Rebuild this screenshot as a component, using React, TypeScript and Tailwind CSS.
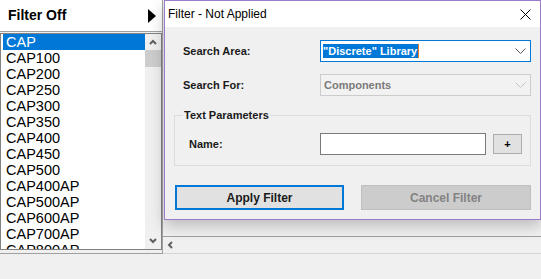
import React from 'react';

const parts = [
  'CAP', 'CAP100', 'CAP200', 'CAP250', 'CAP300', 'CAP350', 'CAP400', 'CAP450',
  'CAP500', 'CAP400AP', 'CAP500AP', 'CAP600AP', 'CAP700AP', 'CAP800AP',
];

const font = { fontFamily: '"Liberation Sans", Arial, sans-serif' };

const ComboChevron = ({ color }: { color: string }) => (
  <svg width="11" height="6" viewBox="0 0 11 6" fill="none">
    <path d="M0.5 0.5 L5.5 5.5 L10.5 0.5" stroke={color} strokeWidth="1" />
  </svg>
);

const SmallChevron = ({ dir }: { dir: 'up' | 'down' | 'left' }) => {
  const d =
    dir === 'up' ? 'M1 5 L4 2 L7 5' : dir === 'down' ? 'M1 1 L4 4 L7 1' : 'M5 1 L2 4 L5 7';
  const size = dir === 'left' ? { w: 7, h: 8 } : { w: 8, h: 6 };
  return (
    <svg width={size.w} height={size.h} viewBox={`0 0 ${size.w} ${size.h}`} fill="none">
      <path d={d} stroke="#606060" strokeWidth="2" />
    </svg>
  );
};

const PartList = () => (
  <div className="w-[163px] h-[254px] flex flex-col border-r border-b border-[#a0a0a0] bg-[#f0f0f0]">
    <div className="h-[32px] bg-white border-b border-[#a0a0a0] flex items-center justify-between pl-[8px] pr-[6px]">
      <span className="text-[14px] font-bold text-black">Filter Off</span>
      <svg width="8" height="14" viewBox="0 0 8 14">
        <path d="M0 0 L8 7 L0 14 Z" fill="#000" />
      </svg>
    </div>
    <div className="mt-[1px] h-[217px] flex border border-[#828282] bg-white">
      <div className="flex-1 overflow-hidden pl-[2px]">
        {parts.map((p, i) => (
          <div
            key={p}
            className={`h-[16px] pl-[3px] text-[14.5px] leading-[16px] ${
              i === 0 ? 'bg-[#0078d7] text-white' : 'text-black'
            }`}
          >
            {p}
          </div>
        ))}
      </div>
      <div className="w-[16px] bg-[#f0f0f0] flex flex-col">
        <div className="h-[16px] flex items-center justify-center">
          <SmallChevron dir="up" />
        </div>
        <div className="h-[17px] bg-[#cdcdcd]" />
        <div className="flex-1" />
        <div className="h-[16px] flex items-center justify-center">
          <SmallChevron dir="down" />
        </div>
      </div>
    </div>
  </div>
);

const FilterDialog = () => (
  <div className="absolute left-[164px] top-0 w-[377px] h-[220px] border border-[#9a7cc9] bg-[#f0f0f0] flex flex-col shadow-[0_6px_14px_rgba(0,0,0,0.22)]">
    <div className="h-[26px] bg-white flex items-center justify-between pl-[3px] pr-[9px]">
      <span className="text-[12px] text-black">Filter - Not Applied</span>
      <svg width="11" height="11" viewBox="0 0 11 11" fill="none">
        <path d="M0.5 0.5 L10.5 10.5 M10.5 0.5 L0.5 10.5" stroke="#000" strokeWidth="1" />
      </svg>
    </div>
    <div className="flex flex-col pt-[13px] pl-[18px] pr-[8px] text-[11px] font-bold">
      <div className="flex items-center h-[22px]">
        <span className="w-[137px] text-[#1a1a1a]">Search Area:</span>
        <div className="w-[211px] h-[22px] bg-white border border-[#0078d7] flex items-center justify-between pl-[2px] pr-[4px]">
          <span className="flex items-center h-[14px]">
            <span className="bg-[#0078d7] text-white h-[14px] leading-[14px] pr-[1px]">"Discrete" Library</span>
            <span className="w-[1px] h-[14px] bg-[#e87a1e]" />
          </span>
          <ComboChevron color="#5a5a5a" />
        </div>
      </div>
      <div className="flex items-center h-[22px] mt-[12px]">
        <span className="w-[137px] text-[#1a1a1a]">Search For:</span>
        <div className="w-[211px] h-[22px] bg-[#f2f2f2] border border-[#cccccc] flex items-center justify-between pl-[3px] pr-[4px]">
          <span className="text-[#7a7a7a]">Components</span>
          <ComboChevron color="#c4c4c4" />
        </div>
      </div>
      <div className="ml-[-9px] mt-[19px] w-[357px] h-[51px] border border-[#dcdcdc] flex flex-col pl-[14px] pr-[8px]">
        <span className="-mt-[7px] ml-[-6px] w-fit h-[13px] leading-[13px] px-[1px] bg-[#f0f0f0] text-[#1a1a1a]">
          Text Parameters
        </span>
        <div className="flex items-center mt-[11px]">
          <span className="w-[131px] text-[#1a1a1a]">Name:</span>
          <div className="w-[166px] h-[22px] bg-white border border-[#7a7a7a]" />
          <div className="ml-[7px] w-[29px] h-[20px] bg-[#e1e1e1] border border-[#adadad] flex items-center justify-center text-black">
            +
          </div>
        </div>
      </div>
      <div className="ml-[-8px] mt-[19px] flex gap-[17px]">
        <div className="w-[169px] h-[25px] bg-[#e1e1e1] border-2 border-[#0078d7] flex items-center justify-center text-[12px] text-[#1a1a1a]">
          Apply Filter
        </div>
        <div className="w-[170px] h-[25px] bg-[#cccccc] border border-[#bfbfbf] flex items-center justify-center text-[12px] text-[#838383]">
          Cancel Filter
        </div>
      </div>
    </div>
  </div>
);

export default function App() {
  return (
    <div className="relative w-[541px] h-[279px] bg-[#f0f0f0] overflow-hidden" style={font}>
      <div className="flex">
        <PartList />
        <div className="flex-1 flex flex-col">
          <div className="h-[236px]" />
          <div className="h-[18px] border-t border-[#a0a0a0] border-b border-b-[#d5d5d5] flex items-center pl-[4px]">
            <SmallChevron dir="left" />
          </div>
        </div>
      </div>
      <FilterDialog />
    </div>
  );
}
